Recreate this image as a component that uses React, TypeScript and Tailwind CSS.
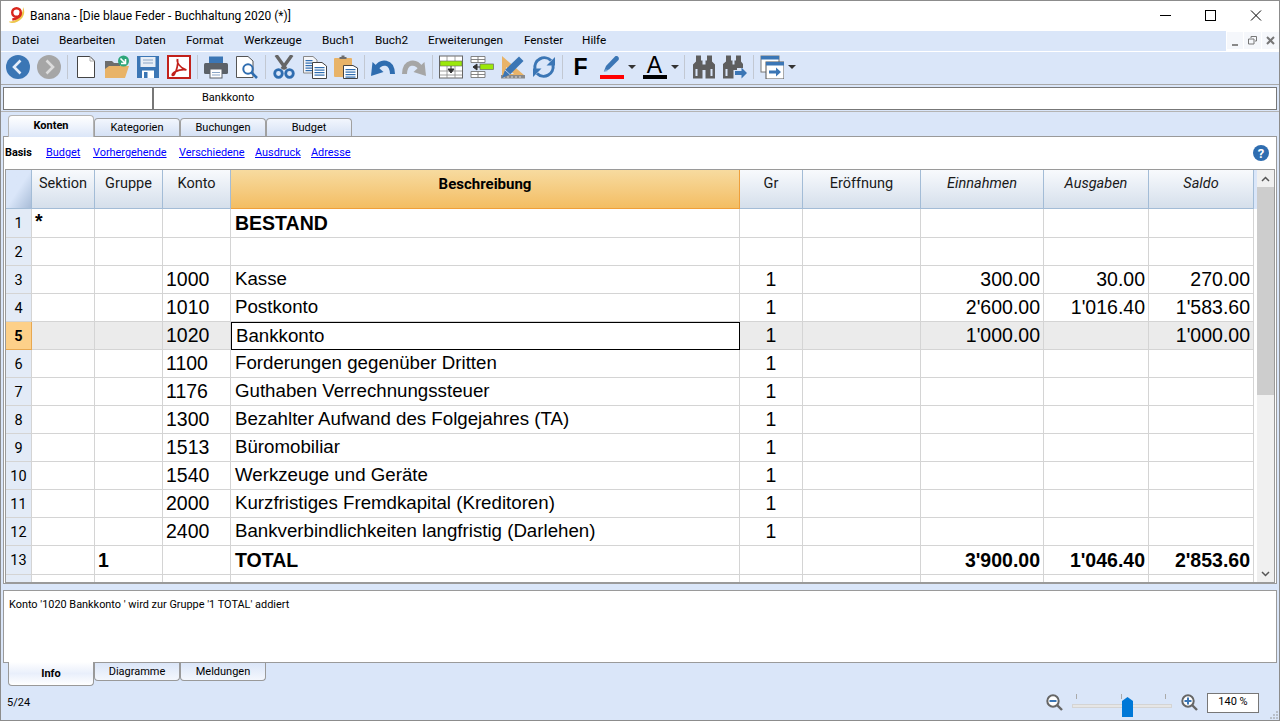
import type { ReactNode } from 'react';

const BLUE = '#3b76b5';
const GREY = '#5e5e5e';

function Svg({ children, className = 'w-[24px] h-[24px]' }: { children: ReactNode; className?: string }) {
  return (
    <svg viewBox="0 0 24 24" className={className}>
      {children}
    </svg>
  );
}

function Tool({ children }: { children: ReactNode }) {
  return <div className="flex h-[30px] w-[31px] shrink-0 items-center justify-center">{children}</div>;
}

function Sep({ wide }: { wide?: boolean }) {
  return (
    <div className={`flex h-[30px] shrink-0 items-center justify-center ${wide ? 'w-[8px]' : 'w-[6px]'}`}>
      <div className="h-[24px] w-px bg-[#c2c8d2]" />
    </div>
  );
}

function Caret() {
  return (
    <div className="flex h-[30px] w-[10px] shrink-0 items-center justify-center">
      <div className="h-0 w-0 border-x-[4px] border-t-[4px] border-x-transparent border-t-[#333]" />
    </div>
  );
}

const Lines = ({ x, y, w, n, gap = 2.5 }: { x: number; y: number; w: number; n: number; gap?: number }) => (
  <>
    {Array.from({ length: n }).map((_, i) => (
      <rect key={i} x={x} y={y + i * gap} width={w} height="1.2" fill="#2f6db0" />
    ))}
  </>
);

function Toolbar() {
  return (
    <div className="flex h-[32px] shrink-0 items-start pl-[1px]">
      <Tool>
        <Svg>
          <circle cx="12" cy="12" r="12" fill={BLUE} />
          <path d="M14.5 5.5 8 12l6.5 6.5" fill="none" stroke="#e6eefa" strokeWidth="2.6" />
        </Svg>
      </Tool>
      <Tool>
        <Svg>
          <circle cx="12" cy="12" r="12" fill="#a6a6a6" />
          <path d="M9.5 5.5 16 12l-6.5 6.5" fill="none" stroke="#dcdcdc" strokeWidth="2.6" />
        </Svg>
      </Tool>
      <Sep />
      <Tool>
        <Svg>
          <path d="M3.5 1.5H16L20.5 6V22.5H3.5Z" fill="#fff" stroke="#444" />
          <path d="M16 1.5V6H20.5" fill="none" stroke="#aaa" />
        </Svg>
      </Tool>
      <Tool>
        <Svg>
          <path d="M0 6h7l2 2h6v14H0Z" fill="#6d6d6d" />
          <path d="M4 11H24L20 23H0V14Z" fill="#e8b368" />
          <circle cx="18.5" cy="6" r="5.5" fill="#2ea67a" />
          <path d="M15.5 3.5 20 8M20.5 4v4.5H16" fill="none" stroke="#fff" strokeWidth="1.6" />
        </Svg>
      </Tool>
      <Tool>
        <Svg>
          <rect x="1" y="1" width="22" height="22" fill={BLUE} />
          <rect x="4.5" y="2" width="15" height="10" fill="#e8eef6" />
          <rect x="7" y="4.5" width="10" height="1" fill="#8ba6c6" />
          <rect x="7" y="7.5" width="10" height="1" fill="#8ba6c6" />
          <rect x="6" y="15.5" width="12" height="7.5" fill="#fff" />
          <rect x="8" y="17" width="3.5" height="6" fill={BLUE} />
        </Svg>
      </Tool>
      <Tool>
        <Svg>
          <rect x="1" y="1" width="22" height="22" fill="#fff" stroke="#c2211b" strokeWidth="2" />
          <path
            d="M10.5 4c-1 3 2 9 9 11-3-1-11 0-14 4-1 2 1 2 2 0 2-3 4-10 3-15"
            fill="none"
            stroke="#c2211b"
            strokeWidth="1.7"
          />
        </Svg>
      </Tool>
      <Sep />
      <Tool>
        <Svg>
          <path d="M5 1.5H19V8H5Z" fill={BLUE} />
          <rect x="0" y="8" width="24" height="11" rx="1.5" fill="#5b6168" />
          <rect x="6" y="14" width="12" height="9" fill="#fff" stroke="#5b6168" />
          <rect x="8" y="17" width="8" height="1" fill="#8ba6c6" />
          <rect x="8" y="19.5" width="8" height="1" fill="#8ba6c6" />
        </Svg>
      </Tool>
      <Tool>
        <Svg>
          <path d="M1.5 1.5H13L18 6V22.5H1.5Z" fill="#fff" stroke="#555" />
          <circle cx="13" cy="14" r="4.7" fill="#fff" stroke="#2f6db0" strokeWidth="2" />
          <path d="M16.5 17.5 22 23" stroke="#2f6db0" strokeWidth="2.6" />
        </Svg>
      </Tool>
      <Sep />
      <Tool>
        <Svg>
          <path d="M4 0 14 14M20 0 10 14" stroke="#666" strokeWidth="3.4" />
          <circle cx="6.5" cy="18.5" r="3.8" fill="none" stroke="#2f6db0" strokeWidth="2.8" />
          <circle cx="17.5" cy="18.5" r="3.8" fill="none" stroke="#2f6db0" strokeWidth="2.8" />
        </Svg>
      </Tool>
      <Tool>
        <Svg>
          <path d="M.5 1.5H10L14 5V18H.5Z" fill="#f4f6fa" stroke="#888" />
          <Lines x={2.5} y={5} w={7} n={5} />
          <path d="M9.5 7.5H19L23.5 11V23.5H9.5Z" fill="#fff" stroke="#444" />
          <Lines x={11.5} y={12} w={10} n={4} />
        </Svg>
      </Tool>
      <Tool>
        <Svg>
          <rect x="0" y="3" width="18" height="19" rx="1" fill="#e8b368" />
          <path d="M5.5 4V2h2V.5h3V2h2v2Z" fill="#6d6d6d" />
          <path d="M9.5 10.5H19L23.5 13V23.5H9.5Z" fill="#fff" stroke="#444" />
          <Lines x={11.5} y={14} w={10} n={4} />
        </Svg>
      </Tool>
      <Sep />
      <Tool>
        <Svg>
          <path d="M0 21 1.5 7 12.5 17Z" fill="#2f6db0" />
          <path d="M5.5 13C10 6 21 5.5 21.5 19" fill="none" stroke="#2f6db0" strokeWidth="5" />
        </Svg>
      </Tool>
      <Tool>
        <Svg>
          <path d="M24 21 22.5 7 11.5 17Z" fill="#a6a6a6" />
          <path d="M18.5 13C14 6 3 5.5 2.5 19" fill="none" stroke="#a6a6a6" strokeWidth="5" />
        </Svg>
      </Tool>
      <Sep />
      <Tool>
        <Svg>
          <rect x=".5" y="1" width="23" height="22" fill="#fff" stroke="#666" />
          <path d="M1 16h22M1 20h22M8 11v12M16 11v12M16 1v5M8 1v5" stroke="#888" strokeWidth=".8" />
          <rect x="1" y="6" width="22" height="5" fill="#9be80a" stroke="#666" strokeWidth=".6" />
          <path d="M12 11v3M9 14h6l-3 4Z" fill="#333" stroke="#333" />
        </Svg>
      </Tool>
      <Tool>
        <Svg>
          <path d="M1 1.5h14v6H1ZM1 16.5h14v6H1ZM8 1.5v6M8 16.5v6M1 4.5h14M1 19.500h14" fill="#fff" stroke="#777" strokeWidth=".9" />
          <rect x="10" y="9" width="13.5" height="5.5" fill="#9be80a" stroke="#666" strokeWidth=".7" />
          <path d="M3.500 12H10M7 9v6L3 12Z" fill="#333" stroke="#333" />
        </Svg>
      </Tool>
      <Tool>
        <Svg>
          <path d="M1 1 23 20H1Z" fill="#e8b368" />
          <path d="M5 12 13 19H5Z" fill="#dae6f9" />
          <rect x="0" y="20" width="24" height="3.5" fill="#8a8a8a" />
          <path d="M3 21v2M7 21v2M11 21v2M15 21v2M19 21v2" stroke="#eee" strokeWidth=".8" />
          <path d="M1 23 4 15 18 1.5l4.500 4.500L9 19.500Z" fill={BLUE} />
          <path d="M4 15 9 19.500" stroke="#dae6f9" strokeWidth=".8" />
        </Svg>
      </Tool>
      <Tool>
        <Svg>
          <path d="M3 14A9.500 9.500 0 0 1 19 5.500" fill="none" stroke={BLUE} strokeWidth="3" />
          <path d="M21 10A9.500 9.500 0 0 1 5 18.500" fill="none" stroke={BLUE} strokeWidth="3" />
          <path d="M23 2v8.500h-8.500ZM1 22v-8.500h8.500Z" fill={BLUE} />
        </Svg>
      </Tool>
      <Sep />
      <Tool>
        <span className="font-['Liberation_Sans',sans-serif] text-[23px] leading-none font-bold text-black">F</span>
      </Tool>
      <Tool>
        <Svg>
          <path d="M4 16 6 11 15 1.500c2-1.500 5 1 3.500 3.500L9 14.500Z" fill={BLUE} />
          <path d="M3.500 17 6 14l2 2Z" fill="#7fa5d0" />
          <rect x="0" y="20" width="24" height="4" fill="#ff0000" />
        </Svg>
      </Tool>
      <Caret />
      <div className="w-[2px] shrink-0" />
      <Tool>
        <div className="flex w-[24px] flex-col items-center">
          <span className="font-['Liberation_Sans',sans-serif] text-[23px] leading-[20px] text-black">A</span>
          <div className="h-[4px] w-[24px] bg-black" />
        </div>
      </Tool>
      <Caret />
      <Sep wide />
      <Tool>
        <Svg>
          <path d="M4 .5h5v5h1.500v4h3v-4H15V.5h5v6l3 3V23.500h-9.500V15h-3v8.500H1V9.500l3-3Z" fill={GREY} />
          <rect x="3.500" y="14" width="2" height="7" fill="#dae6f9" />
          <rect x="18.500" y="14" width="2" height="7" fill="#dae6f9" />
        </Svg>
      </Tool>
      <Tool>
        <Svg>
          <path d="M3 .5h5v5h1.500v4h2v-4H13V.5h5v6l2 2.500V13h-6v2h-3.500v8.500H0V9l3-2.500Z" fill={GREY} />
          <rect x="2.500" y="14" width="2" height="7" fill="#dae6f9" />
          <path d="M12 16h6.500V12.500L24 18l-5.500 5.500V20H12Z" fill={BLUE} />
        </Svg>
      </Tool>
      <Sep />
      <Tool>
        <Svg>
          <rect x="1" y="1" width="18" height="16" fill="#fff" stroke="#777" />
          <rect x="1" y="1" width="18" height="3.500" fill={BLUE} />
          <rect x="6" y="7" width="18" height="17" fill="#fff" stroke="#555" />
          <rect x="6" y="7" width="18" height="3.500" fill={BLUE} />
          <path d="M9 15.500h7V12.500l5 4.500-5 4.500v-3H9Z" fill={BLUE} />
        </Svg>
      </Tool>
      <Caret />
    </div>
  );
}

const menus = [
  { label: 'Datei', cls: 'w-[47px]' },
  { label: 'Bearbeiten', cls: 'w-[76px]' },
  { label: 'Daten', cls: 'w-[51px]' },
  { label: 'Format', cls: 'w-[58px]' },
  { label: 'Werkzeuge', cls: 'w-[78px]' },
  { label: 'Buch1', cls: 'w-[53px]' },
  { label: 'Buch2', cls: 'w-[53px]' },
  { label: 'Erweiterungen', cls: 'w-[96px]' },
  { label: 'Fenster', cls: 'w-[58px]' },
  { label: 'Hilfe', cls: 'w-[40px]' },
];

function TopTab({ label, active, cls }: { label: string; active?: boolean; cls: string }) {
  return active ? (
    <div className={`z-10 -mb-px flex h-[22px] items-center justify-center rounded-t-[4px] border border-b-0 border-[#b4b4b4] bg-gradient-to-b from-[#ffffff] via-[#eef3fc] to-[#dbe6f8] font-bold text-black ${cls}`}>
      {label}
    </div>
  ) : (
    <div className={`flex h-[18px] items-center justify-center rounded-t-[4px] border border-b-0 border-[#a0a0a0] bg-gradient-to-b from-[#f2f6fd] to-[#d5e1f5] pt-[2px] ${cls}`}>
      {label}
    </div>
  );
}

function BottomTab({ label, active, cls }: { label: string; active?: boolean; cls: string }) {
  return active ? (
    <div className={`z-10 -mt-px flex h-[24px] items-center justify-center rounded-b-[4px] border border-t-0 border-[#999] bg-gradient-to-b from-[#ffffff] via-[#e9effb] to-[#ffffff] pt-[2px] font-bold text-black ${cls}`}>
      {label}
    </div>
  ) : (
    <div className={`flex h-[18px] items-center justify-center rounded-b-[4px] border border-[#999] border-t-0 bg-gradient-to-b from-[#dbe6f8] to-[#f4f7fd] pt-[2px] ${cls}`}>
      {label}
    </div>
  );
}

const COLS = 'grid grid-cols-[26px_63px_68px_68px_509px_63px_118px_123px_105px_105px] grid-rows-1';

type Row = {
  n: string;
  s?: string;
  g?: string;
  k?: string;
  b?: string;
  gr?: string;
  ein?: string;
  aus?: string;
  sal?: string;
  bold?: boolean;
  tall?: boolean;
  selected?: boolean;
};

const rows: Row[] = [
  { n: '1', s: '*', b: 'BESTAND', bold: true, tall: true },
  { n: '2' },
  { n: '3', k: '1000', b: 'Kasse', gr: '1', ein: '300.00', aus: '30.00', sal: '270.00' },
  { n: '4', k: '1010', b: 'Postkonto', gr: '1', ein: "2'600.00", aus: "1'016.40", sal: "1'583.60" },
  { n: '5', k: '1020', b: 'Bankkonto', gr: '1', ein: "1'000.00", sal: "1'000.00", selected: true },
  { n: '6', k: '1100', b: 'Forderungen gegenüber Dritten', gr: '1' },
  { n: '7', k: '1176', b: 'Guthaben Verrechnungssteuer', gr: '1' },
  { n: '8', k: '1300', b: 'Bezahlter Aufwand des Folgejahres (TA)', gr: '1' },
  { n: '9', k: '1513', b: 'Büromobiliar', gr: '1' },
  { n: '10', k: '1540', b: 'Werkzeuge und Geräte', gr: '1' },
  { n: '11', k: '2000', b: 'Kurzfristiges Fremdkapital (Kreditoren)', gr: '1' },
  { n: '12', k: '2400', b: 'Bankverbindlichkeiten langfristig (Darlehen)', gr: '1' },
  { n: '13', g: '1', b: 'TOTAL', ein: "3'900.00", aus: "1'046.40", sal: "2'853.60", bold: true, tall: true },
];

function HeadCell({ label, italic }: { label: string; italic?: boolean }) {
  return (
    <div className={`flex h-[39px] justify-center border-r border-b border-[#a3bcd6] bg-gradient-to-b from-[#f8fafd] to-[#d5dfeb] pt-[5px] text-[14.5px] leading-[18px] text-[#1a1a1a] ${italic ? 'italic' : ''}`}>
      {label}
    </div>
  );
}

function GridRow({ r }: { r: Row }) {
  const bg = r.selected ? 'bg-[#ebebeb]' : 'bg-white';
  const nudge = r.tall ? '' : 'pb-[2px]';
  const cell = `border-r border-b border-[#d4d4d4] px-[3px] flex items-center overflow-hidden whitespace-nowrap ${bg} ${nudge} ${r.bold ? 'font-bold' : ''}`;
  const desc = r.bold ? 'text-[19.5px] pl-[4px]' : 'text-[18.7px] pl-[4px]';
  return (
    <div className={`${COLS} ${r.tall ? 'h-[29px]' : 'h-[28px]'} font-['Liberation_Sans',sans-serif] text-[19.5px] leading-[24px] text-black`}>
      <div
        className={`flex items-center justify-center border-r border-b pt-[2px] font-['Roboto',sans-serif] text-[14.5px] ${
          r.selected ? 'border-[#e8a850] bg-[#fdd089] font-bold' : 'border-[#d4d4d4] bg-[#e3ebf7]'
        }`}
      >
        {r.n}
      </div>
      <div className={`${cell} items-start`}>{r.s}</div>
      <div className={cell}>{r.g}</div>
      <div className={cell}>{r.k}</div>
      {r.selected ? (
        <div className={`flex items-center border border-black bg-white px-[3px] pb-[1px] ${desc}`}>{r.b}</div>
      ) : (
        <div className={`${cell} ${desc}`}>{r.b}</div>
      )}
      <div className={`${cell} justify-center`}>{r.gr}</div>
      <div className={cell} />
      <div className={`${cell} justify-end`}>{r.ein}</div>
      <div className={`${cell} justify-end`}>{r.aus}</div>
      <div className={`${cell} justify-end`}>{r.sal}</div>
    </div>
  );
}

function Scrollbar() {
  return (
    <div className="flex w-[17px] flex-col bg-[#f0f0f0]">
      <div className="flex h-[17px] items-center justify-center">
        <svg viewBox="0 0 9 6" className="h-[6px] w-[9px]">
          <path d="M1 5 4.500 1.500 8 5" fill="none" stroke="#555" strokeWidth="1.500" />
        </svg>
      </div>
      <div className="h-[208px] bg-[#cdcdcd]" />
      <div className="flex-1" />
      <div className="flex h-[17px] items-center justify-center">
        <svg viewBox="0 0 9 6" className="h-[6px] w-[9px]">
          <path d="M1 1 4.500 4.500 8 1" fill="none" stroke="#555" strokeWidth="1.500" />
        </svg>
      </div>
    </div>
  );
}

function ZoomIcon({ plus }: { plus?: boolean }) {
  return (
    <svg viewBox="0 0 17 17" className="h-[17px] w-[17px]">
      <circle cx="7" cy="7" r="5.700" fill="#fff" stroke="#666" strokeWidth="2" />
      <path d="M11 11 16 16" stroke="#666" strokeWidth="2.400" />
      <path d={plus ? 'M3.500 7h7M7 3.500v7' : 'M3.500 7h7'} stroke="#3b76b5" strokeWidth="2" />
    </svg>
  );
}

export default function App() {
  return (
    <div className="flex h-[721px] w-[1280px] flex-col overflow-hidden border border-[#8c8c8c] bg-[#dae6f9] font-['Roboto',sans-serif] text-[11px] text-[#111]">
      {/* title bar */}
      <div className="flex h-[30px] shrink-0 items-center bg-white">
        <svg viewBox="0 0 16 16" className="mb-[2px] ml-[8px] h-[16px] w-[16px]">
          <path d="M14 0C17.500 6 13.500 15 3 16 1 16 0 15 0 14.500 7 15 14.500 9 14 0Z" fill="#eec64a" />
          <circle cx="7.500" cy="5.500" r="4.300" fill="none" stroke="#d9261c" strokeWidth="2.400" />
          <path d="M11.800 5.500c0 3.500-3 6.500-8.500 7" fill="none" stroke="#d9261c" strokeWidth="2.400" />
        </svg>
        <span className="ml-[5px] text-[12px] text-black">Banana - [Die blaue Feder - Buchhaltung 2020 (*)]</span>
        <div className="flex-1" />
        <svg viewBox="0 0 102 12" className="mr-[17px] h-[12px] w-[102px]">
          <path d="M0 5.500h11" stroke="#000" strokeWidth="1" />
          <rect x="45.500" y=".5" width="10" height="10" fill="none" stroke="#000" strokeWidth="1" />
          <path d="M91 .5l10 10M101 .5l-10 10" stroke="#000" strokeWidth="1" />
        </svg>
      </div>

      {/* menu */}
      <div className="flex h-[20px] shrink-0 items-center bg-[#dae6f9] pl-[11px] text-[11.75px] text-black">
        {menus.map((m) => (
          <div key={m.label} className={m.cls}>
            {m.label}
          </div>
        ))}
        <div className="flex-1" />
        <div className="flex h-[20px] gap-[1px] bg-white pt-[1px] pl-[1px]">
          <div className="flex h-[17px] w-[16px] items-end justify-center bg-[#f5f7fb] pb-[3px]">
            <div className="h-[2px] w-[6px] bg-[#888]" />
          </div>
          <div className="flex h-[17px] w-[17px] items-center justify-center bg-[#f5f7fb]">
            <svg viewBox="0 0 9 9" className="h-[9px] w-[9px]">
              <path d="M3 2V.5h5.500V5H7M.5 3h5.500v5H.5Z" fill="none" stroke="#777" />
            </svg>
          </div>
          <div className="flex h-[17px] w-[17px] items-center justify-center bg-[#f5f7fb]">
            <svg viewBox="0 0 9 9" className="h-[9px] w-[9px]">
              <path d="M1 1l7 7M8 1 1 8" stroke="#777" strokeWidth="2" />
            </svg>
          </div>
        </div>
      </div>
      <div className="h-px shrink-0 bg-white" />

      {/* toolbar */}
      <Toolbar />
      <div className="h-px shrink-0 bg-[#a8a8a8]" />

      {/* current cell field */}
      <div className="mx-[2px] mt-[2px] flex h-[23px] shrink-0 border border-[#777] bg-white">
        <div className="w-[150px] border-r-2 border-[#777]" />
        <div className="flex items-center pl-[48px] text-[11px] text-black">Bankkonto</div>
      </div>
      <div className="mt-px h-px shrink-0 bg-[#b4b4b4]" />

      {/* top tabs */}
      <div className="mt-[3px] flex h-[21px] shrink-0 items-end pl-[7px] text-[11px] text-black">
        <TopTab label="Konten" active cls="w-[86px]" />
        <TopTab label="Kategorien" cls="w-[86px]" />
        <TopTab label="Buchungen" cls="w-[86px]" />
        <TopTab label="Budget" cls="w-[86px]" />
      </div>

      {/* accounts panel */}
      <div className="mx-[2px] flex h-[448px] shrink-0 flex-col border border-[#9a9a9a] bg-white">
        <div className="flex h-[32px] shrink-0 items-center pr-[7px] pl-[1px] text-[10.9px]">
          <span className="w-[41px] pt-[1px] font-bold text-black">Basis</span>
          <a className="w-[47px] pt-[1px] text-[#0000ff] underline">Budget</a>
          <a className="w-[86px] pt-[1px] text-[#0000ff] underline">Vorhergehende</a>
          <a className="w-[76px] pt-[1px] text-[#0000ff] underline">Verschiedene</a>
          <a className="w-[56px] pt-[1px] text-[#0000ff] underline">Ausdruck</a>
          <a className="pt-[1px] text-[#0000ff] underline">Adresse</a>
          <div className="flex-1" />
          <div className="flex h-[16px] w-[16px] items-center justify-center rounded-full bg-[#2f6db0] text-[13px] leading-none font-bold text-white">
            ?
          </div>
        </div>
        <div className="ml-px flex h-[414px] w-[1270px] border border-[#9a9a9a] bg-white">
          <div className="flex w-[1251px] flex-col overflow-hidden">
            <div className="flex">
              <div className={`${COLS} w-[1248px]`}>
                <div className="h-[39px] border-r border-b border-[#a3bcd6] bg-gradient-to-br from-[#dae6f9] via-[#dae6f9] to-[#a9bdd8]" />
                <HeadCell label="Sektion" />
                <HeadCell label="Gruppe" />
                <HeadCell label="Konto" />
                <div className="flex h-[39px] justify-center border-r border-b border-[#ef9f3a] bg-gradient-to-b from-[#f7db9f] to-[#f3bd62] pt-[5px] text-[15px] leading-[18px] font-bold text-black">
                  Beschreibung
                </div>
                <HeadCell label="Gr" />
                <HeadCell label="Eröffnung" />
                <HeadCell label="Einnahmen" italic />
                <HeadCell label="Ausgaben" italic />
                <HeadCell label="Saldo" italic />
              </div>
              <div className="h-[39px] w-[3px] bg-[#dae6f9]" />
            </div>
            {rows.map((r) => (
              <GridRow key={r.n} r={r} />
            ))}
            <div className={`${COLS} h-[7px] w-[1248px]`}>
              <div className="border-r border-[#d4d4d4] bg-[#e3ebf7]" />
              <div className="border-r border-[#d4d4d4]" />
              <div className="border-r border-[#d4d4d4]" />
              <div className="border-r border-[#d4d4d4]" />
              <div className="border-r border-[#d4d4d4]" />
              <div className="border-r border-[#d4d4d4]" />
              <div className="border-r border-[#d4d4d4]" />
              <div className="border-r border-[#d4d4d4]" />
              <div className="border-r border-[#d4d4d4]" />
              <div className="border-r border-[#d4d4d4]" />
            </div>
          </div>
          <Scrollbar />
        </div>
      </div>

      {/* info panel */}
      <div className="mx-[2px] mt-[6px] h-[73px] shrink-0 border border-[#9a9a9a] bg-white px-[5px] pt-[6px] text-[10.9px] text-black">
        Konto '1020 Bankkonto ' wird zur Gruppe '1 TOTAL' addiert
      </div>
      <div className="flex h-[22px] shrink-0 items-start pl-[7px] text-[11px] text-black">
        <BottomTab label="Info" active cls="w-[86px]" />
        <BottomTab label="Diagramme" cls="w-[86px]" />
        <BottomTab label="Meldungen" cls="w-[86px]" />
      </div>

      {/* status bar */}
      <div className="relative flex min-h-0 flex-1 items-center pl-[6px] text-[11px] text-black">
        <span className="pt-[2px]">5/24</span>
        <div className="flex-1" />
        <ZoomIcon />
        <div className="relative mx-[9px] h-[26px] w-[100px]">
          <div className="absolute top-[4px] left-[4px] h-[5px] w-px bg-[#aaa]" />
          <div className="absolute top-[4px] left-[49px] h-[5px] w-px bg-[#aaa]" />
          <div className="absolute top-[4px] left-[93px] h-[5px] w-px bg-[#aaa]" />
          <div className="absolute top-[14px] left-0 h-[4px] w-[100px] border border-[#d4d4d4] bg-[#e6e6e6]" />
          <svg viewBox="0 0 11 20" className="absolute top-[7px] left-[50px] h-[20px] w-[11px]">
            <path d="M0 4 5.500 0 11 4V20H0Z" fill="#0078d7" />
          </svg>
        </div>
        <ZoomIcon plus />
        <div className="mr-[20px] ml-[9px] flex h-[20px] w-[52px] items-center justify-center border border-[#777] bg-white text-[11px]">
          140 %
        </div>
        <svg viewBox="0 0 8 8" className="absolute right-[1px] bottom-[1px] h-[8px] w-[8px]">
          <path d="M6 0h2v2H6ZM3 3h2v2H3ZM6 3h2v2H6ZM0 6h2v2H0ZM3 6h2v2H3ZM6 6h2v2H6Z" fill="#b8bfc9" />
        </svg>
      </div>
    </div>
  );
}
